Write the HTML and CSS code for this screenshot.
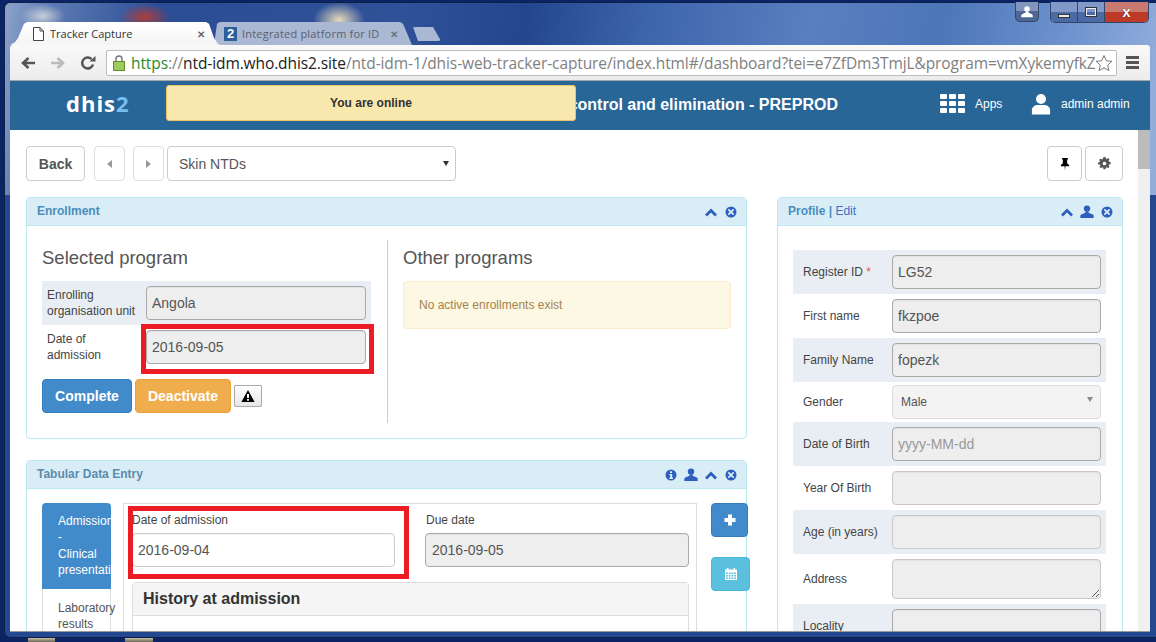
FILE: index.html
```html
<!DOCTYPE html>
<html lang="en">
<head>
<meta charset="utf-8">
<title>Tracker Capture</title>
<link rel="stylesheet" href="styles.css">
</head>
<body>
<svg class="defs" width="0" height="0">
  <defs>
    <symbol id="i-user" viewBox="0 0 14 14"><circle cx="7" cy="3.6" r="3.2"/><path d="M5.4 6.5v1.2L1.2 9.6C.5 10 .3 10.6.3 11.4V13h13.4v-1.6c0-.8-.2-1.4-.9-1.8L8.6 7.7V6.500z"/></symbol>
    <symbol id="i-up" viewBox="0 0 14 14"><path d="M2 10.500 7 5.500l5 5" fill="none" stroke="currentColor" stroke-width="2.800"/></symbol>
    <symbol id="i-close" viewBox="0 0 14 14"><path fill-rule="evenodd" d="M7 1.500a5.500 5.500 0 1 0 0 11 5.500 5.500 0 0 0 0-11zM4.900 3.700 7 5.800l2.100-2.100 1.200 1.200L8.200 7l2.100 2.100-1.200 1.200L7 8.200l-2.100 2.100-1.200-1.200L5.800 7 3.700 4.900z"/></symbol>
    <symbol id="i-info" viewBox="0 0 14 14"><path fill-rule="evenodd" d="M7 1.500a5.500 5.500 0 1 0 0 11 5.500 5.500 0 0 0 0-11zM6 3.200h2v1.700H6zM5.400 6h2.800v3.800h.9V11H5.200V9.800h1V7.200h-.8z"/></symbol>
    <symbol id="i-pin" viewBox="0 0 14 16"><path d="M3.500 1h7v1.300L9.500 3v4l2.300 2.200v1.300H7.500L7 15.500l-.5-5H2.200V9.200L4.500 7V3l-1-.7z"/></symbol>
    <symbol id="i-cog" viewBox="0 0 14 14"><path fill-rule="evenodd" d="M5.900 0h2.200l.3 1.700 1.100.5 1.400-1 1.500 1.500-1 1.400.5 1.100 1.700.3v2.200l-1.700.3-.5 1.100 1 1.400-1.500 1.500-1.400-1-1.100.5-.3 1.700H5.900l-.3-1.700-1.100-.5-1.400 1-1.500-1.500 1-1.400-.5-1.100L0 8.100V5.900l1.700-.3.500-1.100-1-1.400 1.500-1.500 1.400 1 1.100-.5zM7 5a2 2 0 1 0 0 4 2 2 0 0 0 0-4z"/></symbol>
    <symbol id="i-warn" viewBox="0 0 14 14"><path fill-rule="evenodd" d="M7 1 13.600 13H.4zM6 5v4h2V5zm0 5v1.700h2V10z"/></symbol>
    <symbol id="i-cal" viewBox="0 0 14 14"><path fill-rule="evenodd" d="M1 2.500h2V1h1.500v1.500h5V1H11v1.500h2V13H1zM2 5.500v1.600h1.800V5.500zm2.800 0v1.600h1.800V5.500zm2.700 0v1.600h1.800V5.500zm2.700 0v1.600H12V5.500zM2 8v1.600h1.800V8zm2.800 0v1.600h1.800V8zm2.700 0v1.600h1.800V8zm2.700 0v1.600H12V8zM2 10.400V12h1.800v-1.600zm2.800 0V12h1.800v-1.600zm2.700 0V12h1.800v-1.600zm2.700 0V12H12v-1.600z"/></symbol>
  </defs>
</svg>

<div class="window">
  <div class="winbtns">
    <div class="wb wb-user"><svg class="wb-ic" width="12" height="12"><use href="#i-user"/></svg></div>
    <div class="wb-group">
      <div class="wb wb-min"><span class="min-bar"></span></div>
      <div class="wb wb-max"><span class="max-box"></span></div>
      <div class="wb wb-close">x</div>
    </div>
  </div>

  <div class="tabstrip">
    <div class="tab tab-on">
      <svg class="fav" width="11" height="14" viewBox="0 0 11 14"><path d="M.5.500h6.500L10.500 4v9.500H.5z" fill="#fff" stroke="#444"/><path d="M7 .5V4h3.500" fill="none" stroke="#444"/></svg>
      <span class="tab-title">Tracker Capture</span>
      <span class="tab-x">✕</span>
    </div>
    <div class="tab tab-off">
      <span class="fav2">2</span>
      <span class="tab-title">Integrated platform for ID</span>
      <span class="tab-x">✕</span>
    </div>
    <div class="tab-new"></div>
  </div>

  <div class="toolbar">
    <svg class="nav" width="16" height="16" viewBox="0 0 16 16"><path d="M15 8H4M8.500 3 3 8l5.500 5" fill="none" stroke="#555" stroke-width="2.600"/></svg>
    <svg class="nav" width="16" height="16" viewBox="0 0 16 16"><path d="M1 8h11M7.500 3 13 8l-5.500 5" fill="none" stroke="#bbb" stroke-width="2.600"/></svg>
    <svg class="nav" width="16" height="16" viewBox="0 0 16 16"><path d="M13 9.500A5.500 5.500 0 1 1 11.500 4" fill="none" stroke="#555" stroke-width="2.500"/><path d="M9.500 6.500h6V1z" fill="#555"/></svg>
    <div class="omni">
      <svg class="lock" width="12" height="16" viewBox="0 0 12 16"><path d="M3 7V4a3 3 0 0 1 6 0v3" fill="none" stroke="#777" stroke-width="1.500"/><rect x=".5" y="6.500" width="11" height="9" fill="#9ccb5c" stroke="#5f8f2a"/></svg>
      <div class="url"><span class="u-green">https</span><span class="u-grey">://</span><span class="u-dark">ntd-idm.who.dhis2.site</span><span class="u-grey">/ntd-idm-1/dhis-web-tracker-capture/index.html#/dashboard?tei=e7ZfDm3TmjL&amp;program=vmXykemyfkZ</span></div>
      <svg class="star" width="18" height="18" viewBox="0 0 18 18"><path d="M9 1.500l2.300 5.200 5.600.6-4.200 3.800 1.200 5.500L9 13.800l-4.900 2.800 1.200-5.500L1.100 7.300l5.600-.6z" fill="#fff" stroke="#777"/></svg>
    </div>
    <div class="menu"><span></span><span></span><span></span></div>
  </div>

  <div class="page">
    <header class="topbar">
      <div class="logo">dhis<span class="logo-2">2</span></div>
      <div class="site-title">NTD control and elimination - PREPROD</div>
      <div class="apps">
        <div class="apps-grid"><i></i><i></i><i></i><i></i><i></i><i></i><i></i><i></i><i></i></div>
        <span>Apps</span>
      </div>
      <div class="me">
        <svg class="me-ic" width="20" height="22" viewBox="0 0 22 23"><circle cx="11" cy="6" r="5.500"/><path d="M1 23v-5c0-3 3-5.500 6-5.500h8c3 0 6 2.500 6 5.500v5z"/></svg>
        <span>admin admin</span>
      </div>
      <div class="online">You are online</div>
    </header>

    <div class="scrollarea">
      <main class="content">
        <div class="actions">
          <button class="btn btn-back">Back</button>
          <button class="btn btn-step"><span class="tri-l"></span></button>
          <button class="btn btn-step"><span class="tri-r"></span></button>
          <div class="prog-select"><span>Skin NTDs</span><span class="caret"></span></div>
          <div class="spacer"></div>
          <button class="btn btn-pin"><svg width="12" height="16" class="ic-black"><use href="#i-pin"/></svg></button>
          <button class="btn btn-cog"><svg width="13" height="13" class="ic-grey"><use href="#i-cog"/></svg></button>
        </div>

        <div class="columns">
          <div class="col-main">
            <section class="panel panel-enroll">
              <div class="panel-head">
                <span class="panel-title">Enrollment</span>
                <span class="panel-tools">
                  <svg width="14" height="14"><use href="#i-up"/></svg>
                  <svg width="14" height="14"><use href="#i-close"/></svg>
                </span>
              </div>
              <div class="enroll-body">
                <div class="enroll-left">
                  <h3 class="sub">Selected program</h3>
                  <div class="e-row e-stripe">
                    <label class="e-label">Enrolling organisation unit</label>
                    <input class="field" readonly value="Angola">
                  </div>
                  <div class="e-row">
                    <label class="e-label">Date of admission</label>
                    <div class="marked">
                      <input class="field" readonly value="2016-09-05">
                      <div class="redbox redbox-a"></div>
                    </div>
                  </div>
                  <div class="e-btns">
                    <button class="act act-blue">Complete</button>
                    <button class="act act-orange">Deactivate</button>
                    <button class="warn"><svg width="14" height="14"><use href="#i-warn"/></svg></button>
                  </div>
                </div>
                <div class="enroll-right">
                  <h3 class="sub">Other programs</h3>
                  <div class="notice">No active enrollments exist</div>
                </div>
              </div>
            </section>

            <section class="panel panel-tab">
              <div class="panel-head">
                <span class="panel-title panel-title-muted">Tabular Data Entry</span>
                <span class="panel-tools">
                  <svg width="14" height="14"><use href="#i-info"/></svg>
                  <svg width="14" height="14"><use href="#i-user"/></svg>
                  <svg width="14" height="14"><use href="#i-up"/></svg>
                  <svg width="14" height="14"><use href="#i-close"/></svg>
                </span>
              </div>
              <div class="tab-body">
                <nav class="stages">
                  <div class="stage stage-on">Admission<br>-<br>Clinical<br>presentation</div>
                  <div class="stage">Laboratory<br>results</div>
                </nav>
                <div class="event">
                  <div class="event-dates">
                    <div class="date-a">
                      <label class="d-label">Date of admission</label>
                      <input class="field field-white" readonly value="2016-09-04">
                      <div class="redbox redbox-b"></div>
                    </div>
                    <div class="date-b">
                      <label class="d-label">Due date</label>
                      <input class="field" readonly value="2016-09-05">
                    </div>
                  </div>
                  <div class="section">
                    <div class="section-head">History at admission</div>
                  </div>
                </div>
                <div class="side-btns">
                  <button class="side side-plus"><svg width="14" height="14" viewBox="0 0 14 14"><path d="M5 1.500h4V5h3.500v4H9v3.500H5V9H1.500V5H5z" fill="#fff"/></svg></button>
                  <button class="side side-cal"><svg width="14" height="14" class="ic-white"><use href="#i-cal"/></svg></button>
                </div>
              </div>
            </section>
          </div>

          <aside class="col-side">
            <section class="panel panel-profile">
              <div class="panel-head">
                <span class="panel-title">Profile | <a class="edit">Edit</a></span>
                <span class="panel-tools">
                  <svg width="14" height="14"><use href="#i-up"/></svg>
                  <svg width="14" height="14"><use href="#i-user"/></svg>
                  <svg width="14" height="14"><use href="#i-close"/></svg>
                </span>
              </div>
              <div class="profile-body">
                <div class="p-row p-stripe"><label class="p-label">Register ID <span class="req">*</span></label><input class="field" readonly value="LG52"></div>
                <div class="p-row"><label class="p-label">First name</label><input class="field" readonly value="fkzpoe"></div>
                <div class="p-row p-stripe"><label class="p-label">Family Name</label><input class="field" readonly value="fopezk"></div>
                <div class="p-row p-gender"><label class="p-label">Gender</label><div class="gender-select"><span>Male</span><span class="caret caret-grey"></span></div></div>
                <div class="p-row p-stripe"><label class="p-label">Date of Birth</label><input class="field" readonly placeholder="yyyy-MM-dd"></div>
                <div class="p-row"><label class="p-label">Year Of Birth</label><input class="field field-light" readonly></div>
                <div class="p-row p-stripe"><label class="p-label">Age (in years)</label><input class="field field-light" readonly></div>
                <div class="p-row p-address"><label class="p-label">Address</label><textarea class="field field-light field-area" readonly></textarea></div>
                <div class="p-row p-stripe"><label class="p-label">Locality</label><input class="field" readonly></div>
              </div>
            </section>
          </aside>
        </div>
      </main>
      <div class="scrollbar"><div class="thumb"></div></div>
    </div>
  </div>
</div>
</body>
</html>
```
FILE: styles.css
```css
* { box-sizing: border-box; }
html, body { margin: 0; padding: 0; height: 642px; overflow: hidden; }
body {
  padding: 2px 0 0 4px;
  font-family: "Liberation Sans", Arial, sans-serif;
  font-size: 12px;
  color: #333;
  background:
    linear-gradient(#c9c2a5, #6a6655) 28px 638px / 27px 4px no-repeat,
    linear-gradient(#c9c2a5, #6a6655) 125px 638px / 28px 4px no-repeat,
    #0b2466;
}
.defs { position: absolute; }
button, input, textarea { font-family: inherit; }

.window {
  position: relative;
  width: 1152px;
  height: 636px;
  padding: 19px 6px 5px 5px;
  display: flex;
  flex-direction: column;
  border: 1px solid #101f45;
  border-right: 0;
  border-radius: 6px 0 0 6px;
  background:
    radial-gradient(ellipse 22px 12px at 38px 13px, rgba(225,225,225,.8), transparent),
    radial-gradient(ellipse 26px 13px at 140px 14px, rgba(178,60,55,.95), transparent),
    radial-gradient(ellipse 26px 18px at 334px 17px, rgba(240,225,190,.95), transparent),
    linear-gradient(180deg, transparent 0, transparent 192px, #234890 192px),
    linear-gradient(100deg, #8ea3cb 0, #5d7bb3 46px, #2a4d95 156px, #2f5198 396px, #23468f 516px, #3d65ac 636px, #5a7fc0 796px, #4c76b8 926px, #6f93cf 1056px, #93aedb 1152px);
}

.winbtns { position: absolute; top: -1px; right: 7px; display: flex; gap: 11px; }
.wb { height: 20px; display: flex; align-items: center; justify-content: center; }
.wb-group { display: flex; border: 1px solid #33456b; border-top: 0; border-radius: 0 0 5px 5px; overflow: hidden; }
.wb-user { width: 24px; border: 1px solid #33456b; border-top: 0; border-radius: 0 0 5px 5px; background: linear-gradient(#8296bb 50%, #4d6794 50%); }
.wb-ic { fill: #fff; }
.wb-min, .wb-max { width: 27px; background: linear-gradient(#8099c8 50%, #4a6ba5 50%); border-right: 1px solid #33456b; }
.min-bar { width: 12px; height: 4px; margin-top: 7px; background: #eee; border: 1px solid #333; }
.max-box { width: 12px; height: 10px; border: 2px solid #eee; outline: 1px solid #333; outline-offset: -1px; }
.wb-close { width: 43px; background: linear-gradient(#c9796f 50%, #bd3a28 50%); color: #fff; font-weight: bold; font-size: 15px; line-height: 18px; text-shadow: 0 0 1px #000; }

.tabstrip { height: 23px; display: flex; align-items: flex-end; flex: none; }
.tab { height: 23px; display: flex; align-items: center; font: 11px "Open Sans", sans-serif; }
.tab-on {
  position: relative;
  z-index: 1;
  width: 210px;
  padding: 0 15px 0 23px;
  background: linear-gradient(#fff, #f5f5f5);
  color: #333;
  clip-path: polygon(0 100%, 5px 88%, 8px 70%, 14px 8%, 17px 0, 196px 0, 199px 8%, 204px 70%, 208px 96%, 210px 100%);
}
.tab-off {
  width: 198px;
  margin-left: -6px;
  padding: 0 14px 0 10px;
  background: #aab8d3;
  color: #5b6170;
  clip-path: polygon(0 100%, 3px 8%, 6px 0, 186px 0, 189px 8%, 198px 100%);
}
.tab-off .tab-title { letter-spacing: .2px; }
.tab-title { flex: 1; white-space: nowrap; overflow: hidden; }
.tab-x { font-size: 10px; font-weight: bold; color: #666; margin-left: 8px; }
.tab-off .tab-x { color: #6d7484; }
.fav { flex: none; margin-right: 6px; }
.fav2 { flex: none; width: 13px; height: 14px; margin-right: 5px; background: #2a5f99; color: #fff; font: bold 13px/14px "Liberation Sans", sans-serif; text-align: center; }
.tab-new { width: 29px; height: 14px; margin-bottom: 4px; background: #aab8d3; border-radius: 3px 3px 3px 4px; clip-path: polygon(1px 0, 21px 0, 29px 100%, 6px 100%); }

.toolbar {
  height: 36px; flex: none; display: flex; align-items: center;
  background: linear-gradient(#f9f9f9, #ececec);
  border-bottom: 1px solid #a8a8a8;
  border-radius: 3px 3px 0 0;
  padding-left: 10px;
}
.nav { flex: none; margin-right: 14px; }
.omni {
  width: 1011px; height: 26px; margin-left: -4px; flex: none; display: flex; align-items: center;
  background: #fff; border: 1px solid #bdbdbd; border-radius: 2px; padding: 0 3px 0 6px;
}
.lock { flex: none; margin-right: 6px; }
.url { flex: 1; overflow: hidden; white-space: nowrap; font: 15.5px "Open Sans", sans-serif; color: #888; letter-spacing: -.1px; }
.u-green { color: #2a8a2a; }
.u-dark { color: #222; }
.u-grey { color: #808080; }
.star { flex: none; }
.menu { margin-left: 9px; width: 13px; display: flex; flex-direction: column; gap: 2px; }
.menu span { height: 3px; background: #555; }

.page { flex: 1; min-height: 0; display: flex; flex-direction: column; overflow: hidden; background: #fff; border-bottom: 1px solid #999; }
.topbar { position: relative; height: 49px; flex: none; display: flex; align-items: center; padding-bottom: 4px; background: #276696; color: #fff; }
.logo { width: 56px; margin-left: 56px; margin-top: -1px; font: 700 22px "Open Sans", sans-serif; letter-spacing: 1px; white-space: nowrap; }
.logo-2 { color: #77bff2; }
.site-title { width: 716px; margin-top: 2px; text-align: right; font-weight: bold; font-size: 16px; white-space: nowrap; }
.apps { margin-left: 102px; display: flex; align-items: center; gap: 10px; width: 91px; }
.apps-grid { display: grid; grid-template-columns: repeat(3, 7px); grid-auto-rows: 5px; gap: 2px 2px; }
.apps-grid i { background: #fff; border-radius: 1px; }
.me { display: flex; align-items: center; gap: 10px; }
.me-ic { fill: #fff; }
.online {
  position: absolute; left: 156px; top: 4px; width: 410px; height: 36px;
  display: flex; align-items: center; justify-content: center;
  background: #f9e8ae; border: 1px solid #e8c46a; border-radius: 3px;
  color: #333; font-weight: bold; font-size: 12px;
}

.scrollarea { flex: 1; min-height: 0; display: flex; }
.content { width: 1128px; padding: 16px 15px 0 16px; flex: none; overflow: hidden; }
.scrollbar { width: 12px; flex: none; background: #f0f0f0; }
.thumb { height: 39px; background: #bcbcbc; }

.actions { display: flex; align-items: stretch; height: 35px; }
.btn { background: #fff; border: 1px solid #ccc; border-radius: 4px; color: #555; padding: 0; display: flex; align-items: center; justify-content: center; }
.btn-back { width: 59px; font-weight: bold; font-size: 14px; margin-right: 9px; }
.btn-step { width: 31px; margin-right: 8px; border-color: #ddd; }
.btn-step + .btn-step { margin-right: 3px; }
.tri-l { border: 4px solid transparent; border-left: 0; border-right: 5px solid #999; }
.tri-r { border: 4px solid transparent; border-right: 0; border-left: 5px solid #999; }
.prog-select { width: 289px; display: flex; align-items: center; justify-content: space-between; padding: 0 6px 0 11px; border: 1px solid #ccc; border-radius: 4px; font-size: 14px; color: #555; }
.caret { border: 3px solid transparent; border-bottom: 0; border-top: 5px solid #333; }
.caret-grey { border-top-color: #888; margin-top: -6px; }
.spacer { flex: 1; }
.btn-pin { width: 35px; margin-right: 3px; }
.btn-cog { width: 38px; }
.ic-black { fill: #000; }
.ic-grey { fill: #555; }
.ic-white { fill: #fff; }

.columns { display: flex; gap: 30px; margin-top: 16px; align-items: flex-start; }
.col-main { width: 721px; flex: none; }
.col-side { width: 346px; flex: none; }

.panel { background: #fff; border: 1px solid #bce8f1; border-radius: 4px; }
.panel-head { height: 28px; background: #d9edf7; border-bottom: 1px solid #bce8f1; border-radius: 3px 3px 0 0; display: flex; align-items: center; justify-content: space-between; padding: 0 8px 0 10px; }
.panel-title { margin-top: -2px; font-weight: bold; font-size: 12px; color: #4b8dbb; }
.panel-title-muted { color: #5b8cae; }
.edit { font-weight: normal; color: #3f6fc5; }
.panel-tools { display: flex; gap: 6px; align-items: center; color: #2f5fbd; fill: #2f5fbd; }

.enroll-body { display: flex; padding: 14px 15px 15px; }
.enroll-left { width: 346px; flex: none; border-right: 1px solid #ccc; padding: 8px 16px 10px 0; }
.enroll-right { flex: 1; padding: 8px 0 0 15px; }
.sub { margin: 0 0 13px; font-size: 18.5px; line-height: 20px; font-weight: normal; color: #555; }
.e-row { display: flex; align-items: center; height: 44px; padding: 0 5px; }
.e-stripe { background: #e9eef5; }
.e-label { width: 99px; flex: none; padding-right: 8px; line-height: 16px; color: #444; }
.marked { position: relative; flex: 1; }
.e-row .field { width: 220px; }
.field {
  display: block; height: 34px; padding: 0 5px; width: 100%;
  background: #eee; border: 1px solid #a9a9a9; border-radius: 4px;
  color: #555; font-size: 14px; outline: 0;
  box-shadow: inset 0 1px 1px rgba(0,0,0,.05);
}
.field::placeholder { color: #999; }
.field-light { border-color: #c8c8c8; }
.field-white { background: #fff; border-color: #ccc; }
.redbox { position: absolute; border: 5px solid #ed1c24; pointer-events: none; }
.redbox-a { left: -5px; top: -6px; width: 233px; height: 50px; }
.e-btns { display: flex; align-items: center; gap: 3px; margin-top: 10px; }
.act { height: 34px; border: 1px solid; border-radius: 4px; color: #fff; font-weight: bold; font-size: 14px; padding: 0; }
.act-blue { width: 90px; background: #428bca; border-color: #357ebd; }
.act-orange { width: 96px; background: #f0ad4e; border-color: #eea236; }
.warn { width: 28px; height: 22px; padding: 0; background: linear-gradient(#fff, #e6e6e6); border: 1px solid #aaa; border-radius: 1px; display: flex; align-items: center; justify-content: center; }
.notice { height: 48px; display: flex; align-items: center; padding-left: 15px; background: #fcf8e3; border: 1px solid #faebcc; border-radius: 4px; color: #a5824d; font-size: 12px; }

.panel-tab { margin-top: 21px; }
.tab-body { display: flex; padding: 14px 0 0 15px; height: 300px; }
.stages { width: 69px; flex: none; margin-right: 12px; }
.stage { padding: 11px 0 0 15px; height: 60px; line-height: 16px; color: #555; white-space: nowrap; border: 1px solid #ddd; border-top: 0; border-bottom: 0; }
.stage-on { height: 86px; padding: 10px 0 0 16px; line-height: 16.4px; background: #428bca; color: #fff; border: 0; border-radius: 4px 4px 0 0; }
.event { position: relative; width: 574px; flex: none; border: 1px solid #ddd; background: #fff; padding: 10px 7px 0 8px; }
.event-dates { display: flex; gap: 30px; }
.date-a { position: relative; width: 263px; }
.date-b { width: 264px; }
.date-b .field { padding-left: 6px; }
.date-b .d-label { padding-left: 1px; }
.d-label { display: block; height: 19px; line-height: 12px; color: #444; }
.redbox-b { left: -4px; top: -8px; width: 281px; height: 73px; }
.section { margin-top: 15px; border: 1px solid #ddd; border-radius: 4px 4px 0 0; height: 120px; }
.section-head { height: 33px; background: #f5f5f5; border-bottom: 1px solid #ddd; padding-left: 10px; font-weight: bold; font-size: 16px; line-height: 32px; color: #333; }
.side-btns { display: flex; flex-direction: column; align-items: flex-start; margin-left: 14px; gap: 20px; }
.side { height: 34px; padding: 0; border: 1px solid; border-radius: 4px; display: flex; align-items: center; justify-content: center; }
.side-plus { width: 37px; background: #428bca; border-color: #357ebd; }
.side-cal { width: 39px; background: #5bc0de; border-color: #46b8da; }

.profile-body { padding: 24px 16px 0 15px; }
.p-row { display: flex; align-items: center; height: 44px; padding: 0 5px 0 10px; }
.p-stripe { background: #e9eef5; }
.p-gender { height: 40px; }
.p-address { height: 50px; }
.p-label { width: 89px; flex: none; color: #444; }
.req { color: #e05050; }
.gender-select { flex: 1; height: 34px; display: flex; align-items: center; justify-content: space-between; padding: 0 7px 0 8px; background: #f3f3f3; border: 1px solid #ddd; border-radius: 4px; color: #555; }
.field-area { height: 40px; resize: vertical; }
```
